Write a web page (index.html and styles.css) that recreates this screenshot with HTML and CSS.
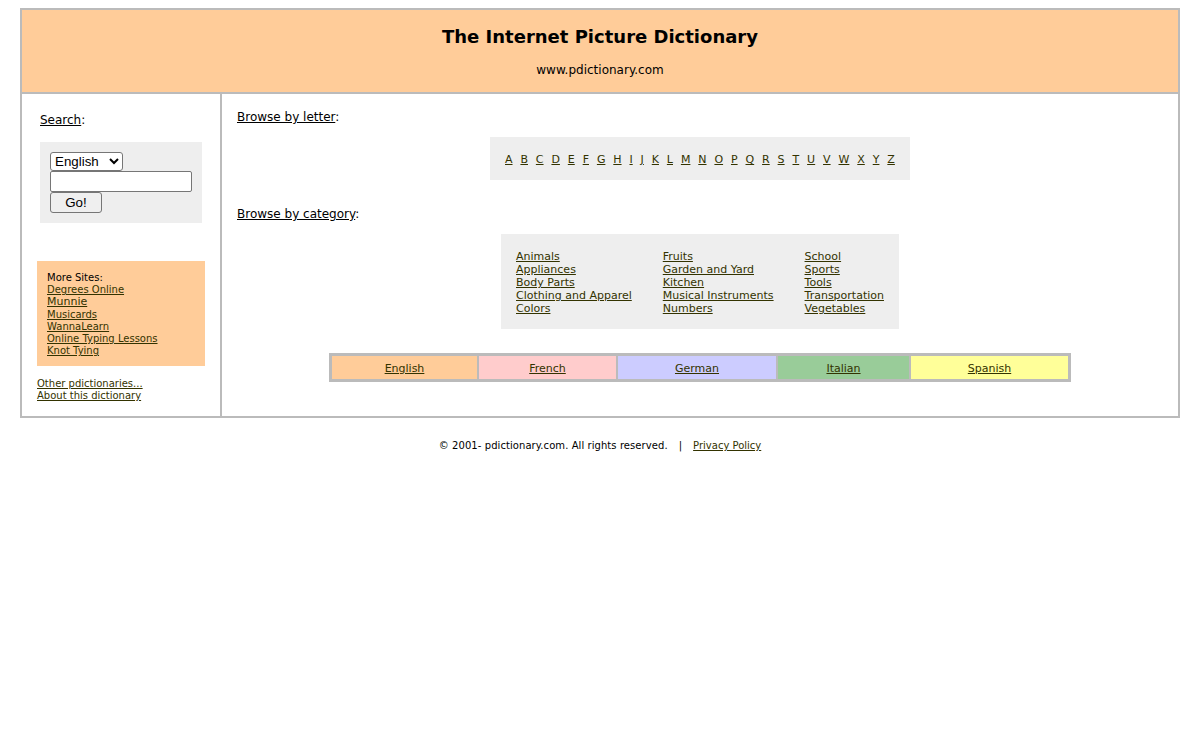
FILE: index.html
```html
<!DOCTYPE html>
<html lang="en">
<head>
<meta charset="utf-8">
<title>The Internet Picture Dictionary</title>
<link rel="stylesheet" href="styles.css">
</head>
<body>
<div class="frame">
  <header class="masthead">
    <h1 class="title">The Internet Picture Dictionary</h1>
    <p class="domain">www.pdictionary.com</p>
  </header>
  <div class="columns">
    <aside class="side">
      <p class="search-label"><u>Search</u>:</p>
      <form class="search">
        <select class="lang"><option>English</option></select>
        <input class="query" type="text">
        <button class="go" type="button">Go!</button>
      </form>
      <div class="sites">
        <div>More Sites:</div>
        <a href="#">Degrees Online</a>
        <a class="big" href="#">Munnie</a>
        <a href="#">Musicards</a>
        <a href="#">WannaLearn</a>
        <a href="#">Online Typing Lessons</a>
        <a href="#">Knot Tying</a>
      </div>
      <div class="side-links">
        <a href="#">Other pdictionaries...</a>
        <a href="#">About this dictionary</a>
      </div>
    </aside>
    <main class="content">
      <p class="browse-letter"><u>Browse by letter</u>:</p>
      <nav class="letters">
        <a href="#">A</a><a href="#">B</a><a href="#">C</a><a href="#">D</a><a href="#">E</a><a href="#">F</a><a href="#">G</a><a href="#">H</a><a href="#">I</a><a href="#">J</a><a href="#">K</a><a href="#">L</a><a href="#">M</a><a href="#">N</a><a href="#">O</a><a href="#">P</a><a href="#">Q</a><a href="#">R</a><a href="#">S</a><a href="#">T</a><a href="#">U</a><a href="#">V</a><a href="#">W</a><a href="#">X</a><a href="#">Y</a><a href="#">Z</a>
      </nav>
      <p class="browse-cat"><u>Browse by category</u>:</p>
      <nav class="cats">
        <div class="cat-col">
          <a href="#">Animals</a><a href="#">Appliances</a><a href="#">Body Parts</a><a href="#">Clothing and Apparel</a><a href="#">Colors</a>
        </div>
        <div class="cat-col">
          <a href="#">Fruits</a><a href="#">Garden and Yard</a><a href="#">Kitchen</a><a href="#">Musical Instruments</a><a href="#">Numbers</a>
        </div>
        <div class="cat-col">
          <a href="#">School</a><a href="#">Sports</a><a href="#">Tools</a><a href="#">Transportation</a><a href="#">Vegetables</a>
        </div>
      </nav>
      <nav class="langs">
        <a class="l-en" href="#">English</a>
        <a class="l-fr" href="#">French</a>
        <a class="l-de" href="#">German</a>
        <a class="l-it" href="#">Italian</a>
        <a class="l-es" href="#">Spanish</a>
      </nav>
    </main>
  </div>
</div>
<footer class="foot">© 2001- pdictionary.com. All rights reserved.<span class="pipe">|</span><a href="#">Privacy Policy</a></footer>
</body>
</html>
```
FILE: styles.css
```css
* { box-sizing: border-box; }
body {
  margin: 8px 20px;
  background: #fff;
  color: #000;
  font-family: "DejaVu Sans", Verdana, sans-serif;
  font-size: 12px;
}
a { color: #333300; }
p { margin: 0; }
.frame { border: 2px solid #bbb; height: 410px; display: flex; flex-direction: column; }
.masthead { height: 84px; background: #fc9; border-bottom: 2px solid #bbb; text-align: center; padding-top: 15px; flex: none; }
.title { margin: 0; font-size: 18px; line-height: 24px; font-weight: bold; }
.domain { margin-top: 13px; line-height: 16px; }
.columns { display: flex; flex: 1; }
.side { width: 200px; border-right: 2px solid #bbb; padding: 18px 15px 0; flex: none; }
.search-label { margin-left: 3px; line-height: 16px; }
.search { margin: 14px 3px 0; width: 162px; height: 81px; background: #eee; padding: 10px; display: flex; flex-direction: column; align-items: flex-start; font-family: "Liberation Sans", Arial, sans-serif; }
.lang { width: 73px; height: 19px; font: 13.333px "Liberation Sans", Arial, sans-serif; background: #fff; border: 1px solid #767676; border-radius: 3px; padding: 0; }
.query { width: 142px; height: 21px; border: 1px solid #767676; border-radius: 2px; background: #fff; padding: 0; }
.go { width: 52px; height: 21px; font: 13.333px "Liberation Sans", Arial, sans-serif; background: #efefef; border: 1px solid #767676; border-radius: 3px; padding: 0; color: #000; }
.sites { margin-top: 38px; height: 105px; width: 168px; background: #fc9; padding: 11px 10px 0; font-size: 10px; line-height: 12.2px; }
.sites a, .side-links a { display: block; }
.sites .big { font-size: 11px; }
.side-links { margin-top: 12px; font-size: 10px; line-height: 12px; }
.content { flex: 1; padding: 15px 15px 0; min-width: 0; }
.browse-letter, .browse-cat { line-height: 16px; }
.letters { width: 420px; height: 43px; margin: 12px auto 0; background: #eee; display: flex; justify-content: space-between; align-items: center; padding: 3px 15px 0; font-size: 11px; line-height: 14px; }
.browse-cat { margin-top: 26px; }
.cats { width: 398px; height: 95px; margin: 12px auto 0; background: #eee; padding: 16px 15px 0; display: flex; justify-content: space-between; font-size: 11px; line-height: 13px; }
.cat-col a { display: block; }
.langs { width: 742px; height: 29px; margin: 24px auto 0; border: 3px solid #bbb; background: #bbb; display: grid; grid-template-columns: 145px 137px 158px 131px 157px; grid-template-rows: 23px; gap: 2px; text-align: center; font-size: 11px; line-height: 24px; }
.langs a { padding-top: 1px; }
.l-en { background: #fc9; }
.l-fr { background: #fcc; }
.l-de { background: #ccf; }
.l-it { background: #9c9; }
.l-es { background: #ff9; }
.foot { margin-top: 22px; text-align: center; font-size: 10px; line-height: 12px; letter-spacing: 0.07px; }
.foot a { letter-spacing: 0; }
.pipe { margin: 0 11px; }
```
